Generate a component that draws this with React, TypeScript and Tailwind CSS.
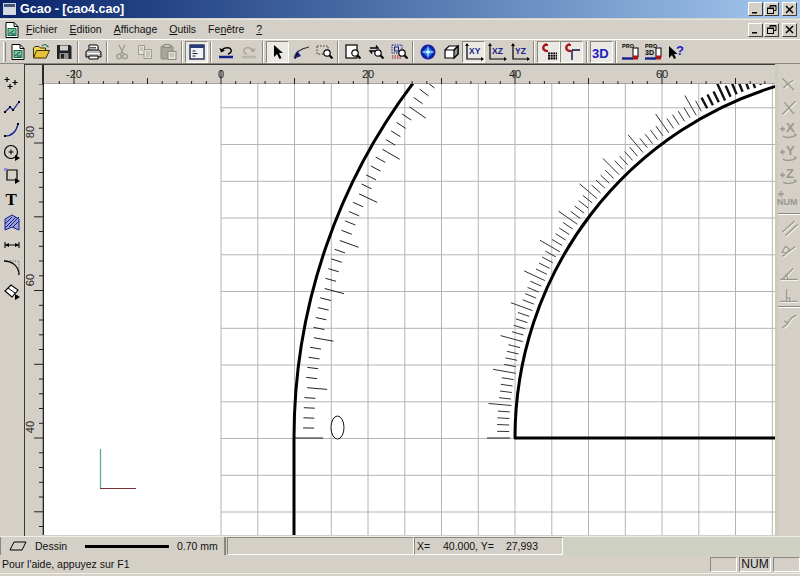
import React from "react";

const X = (u: number) => 221 + 7.35 * u;
const CX = 882.5;
const CY = 437;

function radial(deg: number, r1: number, r2: number) {
  const a = (deg * Math.PI) / 180;
  const c = Math.cos(a);
  const s = Math.sin(a);
  return `M${(CX - r1 * c).toFixed(1)} ${(CY - r1 * s).toFixed(1)}L${(CX - r2 * c).toFixed(1)} ${(CY - r2 * s).toFixed(1)}`;
}

function hatch(r: number, maxDeg: number, sign: number, longA: number, longB: number, shortA: number, shortB: number, from: number) {
  let long = "";
  let short = "";
  for (let d = from; d <= maxDeg; d++) {
    if (d % 5 === 0) long += radial(d, r + sign * longA, r + sign * longB);
    else short += radial(d, r + sign * shortA, r + sign * shortB);
  }
  return { long, short };
}

const S: React.FC<{ children: React.ReactNode; w?: number }> = ({ children, w = 18 }) => (
  <svg width={w} height={18} viewBox={`0 0 ${w} 18`} fill="none" className="shrink-0">{children}</svg>
);

const Mag = ({ x = 10, y = 10 }: { x?: number; y?: number }) => (
  <g>
    <circle cx={x} cy={y} r="3.2" fill="#fff" stroke="#000" strokeWidth="1.2" />
    <path d={`M${x + 2.3} ${y + 2.3}l3.2 3.2`} stroke="#000" strokeWidth="2" />
  </g>
);

const DocGlyph = () => (
  <S>
    <path d="M3 1.5h8l4 4v11H3z" fill="#fff" stroke="#000" />
    <path d="M11 1.5v4h4" stroke="#000" />
    <rect x="5" y="7.5" width="8" height="7" fill="#7fc79a" stroke="#0a6b3a" />
    <path d="M6 13l5-4M8 13h4" stroke="#0a3b6b" />
  </S>
);

const Open = () => (
  <S>
    <path d="M1.5 15V5l1.500-1.500h4L8.500 5h5v2.500" fill="#f3d65a" stroke="#3b3000" />
    <path d="M1.5 15l3-7.500h13L14 15z" fill="#e6c23c" stroke="#3b3000" />
    <path d="M10 3c2-2 4-2 5 0l1.500 1" stroke="#1f6d2a" strokeWidth="1.2" />
  </S>
);

const Save = () => (
  <S>
    <path d="M2 2h13l1.500 1.500V16H2z" fill="#222" />
    <rect x="5" y="2.500" width="8" height="5" fill="#cfcfcf" />
    <rect x="4.500" y="10" width="9" height="6" fill="#8f8f8f" />
    <rect x="6" y="11" width="3" height="4.500" fill="#222" />
  </S>
);

const Print = () => (
  <S>
    <path d="M5 7V2h8l1 1v4" fill="#fff" stroke="#000" />
    <path d="M2 8.500 4 7h10.500L17 9v5H2z" fill="#bdbdbd" stroke="#000" />
    <path d="M3 10.500h13" stroke="#fff" />
    <path d="M5 13h9v3H5z" fill="#fff" stroke="#000" />
    <path d="M6 6h6M6 4.500h6" stroke="#555" />
  </S>
);

const Cut = () => (
  <S>
    <path d="M6 2l4.500 9M12 2L7.500 11" stroke="#9d9a92" strokeWidth="1.300" />
    <circle cx="6" cy="13.500" r="2.300" stroke="#9d9a92" strokeWidth="1.300" />
    <circle cx="12" cy="13.500" r="2.300" stroke="#9d9a92" strokeWidth="1.300" />
  </S>
);

const Copy = () => (
  <S>
    <path d="M2.500 2.500h6v9h-6z" fill="#e4e1da" stroke="#9d9a92" />
    <path d="M8 6.500h7.500v9H8z" fill="#e4e1da" stroke="#9d9a92" />
    <path d="M10 9h4M10 11h4M10 13h4M4 5h3M4 7h3" stroke="#a8a59d" />
  </S>
);

const Paste = () => (
  <S>
    <rect x="2" y="3" width="12" height="13" rx="1" fill="#a8a59d" stroke="#8d8a82" />
    <rect x="5" y="1.500" width="6" height="3" fill="#c9c6be" stroke="#8d8a82" />
    <rect x="9" y="8.500" width="8" height="8" fill="#e4e1da" stroke="#8d8a82" />
    <path d="M11 11h4M11 13h4" stroke="#a8a59d" />
  </S>
);

const View = () => (
  <S>
    <rect x="2" y="2" width="14" height="14" fill="#f2f2f2" stroke="#101a4a" strokeWidth="1.300" />
    <rect x="2" y="2" width="14" height="3" fill="#2b3a7a" />
    <path d="M4.500 8h3M4.500 10.500h5M4.500 13h3" stroke="#101a4a" />
  </S>
);

const Undo = () => (
  <S>
    <path d="M5 7c2-3 8-3 9-.500s-1 4-3 4.500" stroke="#000" strokeWidth="1.400" />
    <path d="M2.500 5l1.500 4.500 4-2z" fill="#000" />
    <path d="M2 14h14" stroke="#14208c" strokeWidth="2.500" />
  </S>
);

const Redo = () => (
  <S>
    <path d="M13 7c-2-3-8-3-9-.500s1 4 3 4.500" stroke="#a8a59d" strokeWidth="1.400" />
    <path d="M15.500 5L14 9.500l-4-2z" fill="#a8a59d" />
    <path d="M2 14h14" stroke="#b9b6ae" strokeWidth="2.500" />
  </S>
);

const Arrow = () => (
  <S>
    <path d="M5 2v12l3-3 2.500 5 2-1-2.500-5h4z" fill="#000" />
  </S>
);

const Node = () => (
  <S>
    <path d="M2 15c1-5 5-9 15-11" stroke="#333" strokeWidth="1.200" />
    <path d="M5 7.500 4 15l5-2z" fill="#14208c" />
    <path d="M3 16l2-6" stroke="#000" />
  </S>
);

const ZoomBox = () => (
  <S>
    <path d="M2 3h11v8H2z" stroke="#333" strokeDasharray="1.500 1.500" />
    <Mag x={12} y={10} />
  </S>
);

const ZoomPage = () => (
  <S>
    <rect x="2" y="2" width="11" height="13" fill="#fff" stroke="#000" strokeWidth="1.200" />
    <Mag x={11} y={10} />
  </S>
);

const ZoomBack = () => (
  <S>
    <path d="M3 5h8l-2-2.500M9 8H3l2 2.500" stroke="#000" strokeWidth="1.300" />
    <Mag x={11} y={10} />
  </S>
);

const ZoomSel = () => (
  <S>
    <rect x="2" y="2" width="10" height="8" stroke="#14208c" strokeDasharray="1.500 1" />
    <path d="M2 13h9M2 15h9" stroke="#b01818" strokeDasharray="1.500 1" strokeWidth="1.200" />
    <rect x="4.500" y="4" width="4" height="4" stroke="#14208c" />
    <Mag x={12} y={10} />
  </S>
);

const Globe = () => (
  <S>
    <circle cx="9" cy="9" r="7.500" fill="#1222a8" />
    <circle cx="9" cy="9" r="4" fill="#2e78e8" />
    <path d="M9 3.500v11M3.500 9h11" stroke="#8fd8ff" strokeWidth="1.300" />
    <circle cx="9" cy="9" r="1.800" fill="#dff6ff" />
  </S>
);

const Cube = () => (
  <S>
    <path d="M3 7l4-4h9v8l-4 4H3z" fill="#fff" stroke="#000" strokeWidth="1.200" />
    <path d="M12 7v8l4-4V3z" fill="#9a9a9a" stroke="#000" strokeWidth="1.200" />
    <path d="M3 7h9l4-4" stroke="#000" strokeWidth="1.200" />
  </S>
);

const Axis = ({ t }: { t: string }) => (
  <S w={20}>
    <path d="M3 2v14h14" stroke="#000" strokeWidth="1.200" />
    <path d="M3 0l-2 3h4zM20 16l-3-2v4z" fill="#000" />
    <text x="5" y="11" fontFamily="Liberation Sans, sans-serif" fontWeight="700" fontSize="8.500" fill="#14208c">{t}</text>
  </S>
);

const MagnetGrid = () => (
  <S>
    <path d="M7 8C2 8 2 1.500 7 1.500" stroke="#a81818" strokeWidth="2.400" />
    <path d="M6 1h2v2H6zM6 7h2v2H6z" fill="#a81818" />
    <path d="M8 9.500h9v7H8z" fill="#000" />
    <path d="M10.500 9v8M13 9v8M15.500 9v8M8 11.500h9M8 14h9" stroke="#d8d5ce" strokeWidth=".7" />
  </S>
);

const MagnetPerp = () => (
  <S>
    <path d="M7 8C2 8 2 1.500 7 1.500" stroke="#a81818" strokeWidth="2.400" />
    <path d="M6 1h2v2H6zM6 7h2v2H6z" fill="#a81818" />
    <path d="M9 7h8M9 7v10" stroke="#0c0c40" strokeWidth="1.400" />
  </S>
);

const ThreeD = () => (
  <S w={20}>
    <text x="0" y="15" fontFamily="Liberation Sans, sans-serif" fontWeight="700" fontSize="13" fill="#1a1ac0">3D</text>
  </S>
);

const Pro = ({ d3 }: { d3?: boolean }) => (
  <S w={20}>
    <text x="1" y="5" fontFamily="Liberation Sans, sans-serif" fontWeight="700" fontSize="5.500" fill="#000">PRO</text>
    {d3 && <text x="1" y="12" fontFamily="Liberation Sans, sans-serif" fontWeight="700" fontSize="7" fill="#000">3D</text>}
    <rect x="12" y="5" width="5" height="9" fill="#fff" stroke="#000" />
    <path d="M1 15.500h11" stroke="#14208c" strokeWidth="2.400" />
    <rect x="12" y="12.500" width="5" height="4" fill="#a81818" />
  </S>
);

const Help = () => (
  <S>
    <path d="M1 3v12l3-3 2 4 2-1-2-4h3.500z" fill="#000" />
    <text x="8" y="12" fontFamily="Liberation Sans, sans-serif" fontWeight="700" fontSize="13" fill="#1a1ac0">?</text>
  </S>
);

const Btn = ({ children, on }: { children: React.ReactNode; on?: boolean }) => (
  <div className={`w-[23px] h-[22px] flex items-center justify-center shrink-0 ${on ? "bg-[#ebe9e3] border border-t-[#8a877f] border-l-[#8a877f] border-r-white border-b-white" : ""}`}>
    {children}
  </div>
);

const Sep = ({ w = "w-[6px]" }: { w?: string }) => (
  <div className={`${w} h-[22px] flex justify-center shrink-0`}>
    <div className="w-[2px] h-full border-l border-l-[#8a877f] border-r border-r-white" />
  </div>
);

const Caption = () => {
  const cls = "w-[15px] h-[14px] bg-[#d4d0c8] border border-t-white border-l-white border-r-[#404040] border-b-[#404040] flex items-center justify-center shrink-0";
  return (
    <div className="flex gap-[1px] items-center">
      <div className={cls}><svg width="9" height="9" viewBox="0 0 9 9"><path d="M1 7h5v1.500H1z" fill="#000" /></svg></div>
      <div className={cls}><svg width="10" height="9" viewBox="0 0 10 9" fill="none"><path d="M3 2.500V.5h6v5H7" stroke="#000" /><rect x=".5" y="3" width="6" height="5.500" stroke="#000" /><path d="M.5 3.500h6M3 1h6" stroke="#000" /></svg></div>
      <div className={`${cls} ml-[2px]`}><svg width="9" height="9" viewBox="0 0 9 9"><path d="M1 1l7 7M8 1 1 8" stroke="#000" strokeWidth="1.500" /></svg></div>
    </div>
  );
};

/* left tools */
const Pts = () => (
  <S><path d="M4 2v5M1.500 4.500h5M12 5v5M9.500 7.500h5M7 9v5M4.500 11.500h5" stroke="#000" strokeWidth="1.200" /></S>
);
const Poly = () => (
  <S><path d="M2 14l5-5 3 3 6-8" stroke="#14208c" strokeWidth="1.200" /><path d="M1 13h2v2H1zM6 8h2v2H6zM9 11h2v2H9zM15 3h2v2h-2z" fill="#000" /></S>
);
const Curve = () => (
  <S><path d="M2 15c6 0 11-3 13-12" stroke="#14208c" strokeWidth="1.200" /><path d="M1 14h2v2H1zM14 2h2v2h-2z" fill="#000" /></S>
);
const Circ = () => (
  <S><circle cx="8" cy="8" r="6.500" stroke="#000" strokeWidth="1.200" /><path d="M8 5.500v5M5.500 8h5" stroke="#000" /><path d="M12 11v6l5-3z" fill="#000" /></S>
);
const Rect = () => (
  <S><path d="M4 3h10v10H4z" stroke="#000" strokeWidth="1.200" /><path d="M1 1h3v3H1z" fill="#8a8ae0" /><path d="M12 11v6l5-3z" fill="#000" /></S>
);
const TGlyph = () => (
  <S><text x="2.500" y="15" fontFamily="Liberation Serif, serif" fontWeight="700" fontSize="17" fill="#000">T</text></S>
);
const HatchI = () => (
  <S>
    <path d="M2 6l7-4 7 4v11l-7-3-7 3z" fill="#9ea0d8" stroke="#14208c" />
    <path d="M2 11l7-7M2 15l11-11M6 14l10-10M10 14l6-6" stroke="#14208c" />
  </S>
);
const Dim = () => (
  <S><path d="M2 6v6M16 6v6M2 9h14" stroke="#000" strokeWidth="1.100" /><path d="M2 9l4-2v4zM16 9l-4-2v4z" fill="#000" /></S>
);
const Fillet = () => (
  <S><path d="M1 2c8 0 15 5 15 14" stroke="#000" strokeWidth="1.300" /><path d="M7 2h9v12" stroke="#555" strokeDasharray="1 1.500" /></S>
);
const Eraser = () => (
  <S><path d="M2 9l6-6 7 5-6 7z" fill="#fff" stroke="#000" strokeWidth="1.100" /><path d="M5 6l7 5" stroke="#000" /><path d="M12 12v6l5-3z" fill="#000" /></S>
);

/* right tools (disabled) */
const g = "#9b988f";
const gl = "#f2f0ea";
const Ghost = ({ d }: { d: string }) => (
  <S w={20}>
    <g transform="scale(1.100)">
      <path d={d} stroke={gl} strokeWidth="1.300" transform="translate(.8 .8)" />
      <path d={d} stroke={g} strokeWidth="1.300" />
    </g>
  </S>
);
const Letter = ({ t }: { t: string }) => (
  <S w={20}>
    <path d="M1 8h5M3.500 5.500v5" stroke={g} strokeWidth="1.500" />
    <text x="7" y="11" fontFamily="Liberation Sans, sans-serif" fontWeight="700" fontSize="13" fill={g}>{t}</text>
    <path d="M4 15c2 2 10 2 13-1l-2-1.500" stroke={g} strokeWidth="1.500" />
  </S>
);
const NumI = () => (
  <S w={24}>
    <path d="M1 4h6M4 1v6" stroke={g} strokeWidth="1.300" />
    <text x="0" y="15" fontFamily="Liberation Sans, sans-serif" fontSize="9" fontWeight="700" fill={g}>NUM</text>
  </S>
);

const topTools: React.ReactNode[] = [
  <Btn key="a"><DocGlyph /></Btn>,
  <Btn key="b"><Open /></Btn>,
  <Btn key="c"><Save /></Btn>,
  <Sep key="s1" />,
  <Btn key="d"><Print /></Btn>,
  <Sep key="s2" />,
  <Btn key="e"><Cut /></Btn>,
  <Btn key="f"><Copy /></Btn>,
  <Btn key="g"><Paste /></Btn>,
  <Sep key="s3" />,
  <Btn key="h" on><View /></Btn>,
  <Sep key="s4" />,
  <Btn key="i"><Undo /></Btn>,
  <Btn key="j"><Redo /></Btn>,
  <Sep key="s5" />,
  <Btn key="k" on><Arrow /></Btn>,
  <Btn key="l"><Node /></Btn>,
  <Btn key="m"><ZoomBox /></Btn>,
  <Sep key="s6" />,
  <Btn key="n"><ZoomPage /></Btn>,
  <Btn key="o"><ZoomBack /></Btn>,
  <Btn key="p"><ZoomSel /></Btn>,
  <Sep key="s7" />,
  <Btn key="q"><Globe /></Btn>,
  <Btn key="r"><Cube /></Btn>,
  <Btn key="t" on><Axis t="XY" /></Btn>,
  <Btn key="u"><Axis t="XZ" /></Btn>,
  <Btn key="v"><Axis t="YZ" /></Btn>,
  <Sep key="s8" />,
  <Btn key="w" on><MagnetGrid /></Btn>,
  <Btn key="x" on><MagnetPerp /></Btn>,
  <Sep key="s9" w="w-[7px]" />,
  <Btn key="y" on><ThreeD /></Btn>,
  <Sep key="s10" />,
  <Btn key="z"><Pro /></Btn>,
  <Btn key="aa"><Pro d3 /></Btn>,
  <Btn key="ab"><Help /></Btn>,
];

const leftTools = [Pts, Poly, Curve, Circ, Rect, TGlyph, HatchI, Dim, Fillet, Eraser];

function HRuler() {
  const xs: React.ReactNode[] = [];
  let d = "";
  for (let u = -22; u <= 76; u += 2) {
    const x = X(u);
    if (x < 44 || x > 775) continue;
    const h = u % 20 === 0 ? 15 : u % 10 === 0 ? 7 : 4;
    d += `M${x.toFixed(1)} 83V${83 - h}`;
  }
  [-20, 0, 20, 40, 60].forEach((u) => {
    xs.push(
      <text key={u} x={X(u)} y={76} textAnchor="middle" fontSize="11" fontFamily="Liberation Sans, sans-serif" fill="#222">{u}</text>
    );
  });
  return (
    <svg width="731" height="20" viewBox="44 63 731 20" className="block shrink-0">
      <path d={d} stroke="#222" strokeWidth="1" />
      {xs}
      <path d="M44 82.500H775" stroke="#222" strokeWidth="1.600" />
    </svg>
  );
}

function VRuler() {
  let d = "";
  for (let k = -6; k < 30; k++) {
    const y = 142 + 14.75 * k;
    if (y < 83 || y > 534) continue;
    const long = k % 5 === 0;
    d += `M44 ${y.toFixed(1)}H${long ? 34 : 39}`;
  }
  const labels: [string, number][] = [["80", 131], ["60", 279], ["40", 426]];
  return (
    <svg width="20" height="451" viewBox="24 83 20 451" className="block shrink-0">
      <path d={d} stroke="#222" strokeWidth="1" />
      <path d="M43.500 83V534" stroke="#222" strokeWidth="1.600" />
      {labels.map(([t, y]) => (
        <text key={t} transform={`translate(34 ${y}) rotate(-90)`} textAnchor="middle" fontSize="11" fontFamily="Liberation Sans, sans-serif" fill="#222">{t}</text>
      ))}
    </svg>
  );
}

function Drawing() {
  const grid: React.ReactNode[] = [];
  for (let k = 0; k <= 15; k++) {
    const x = 221 + 36.75 * k;
    if (x < 775) grid.push(<path key={`v${k}`} d={`M${x.toFixed(1)} 83V534`} stroke="#b4b4b4" strokeWidth="1" />);
  }
  for (let k = -2; k <= 9; k++) {
    const y = 437.5 - 36.75 * k;
    if (y > 83 && y < 534) grid.push(<path key={`h${k}`} d={`M221 ${y.toFixed(1)}H775`} stroke="#b4b4b4" strokeWidth="1" />);
  }
  const leftArc = hatch(588.5, 38, -1, 11, 31, 9, 20, 1);
  const rightArcA = hatch(367.5, 61, 1, 5, 28, 6, 18, 1);
  const rightArcB = hatch(367.5, 71, 1, 5, 28, 6, 18, 62);
  const arc = (r: number, deg: number) => {
    const a = (deg * Math.PI) / 180;
    return `M${CX - r} ${CY}A${r} ${r} 0 0 1 ${(CX - r * Math.cos(a)).toFixed(1)} ${(CY - r * Math.sin(a)).toFixed(1)}`;
  };
  return (
    <svg width="731" height="451" viewBox="44 83 731 451" className="block shrink-0">
      {grid}
      <path d="M293 437H323M487 437H510" stroke="#222" strokeWidth="1" />
      <path d={leftArc.long + leftArc.short} stroke="#222" strokeWidth="1" />
      <path d={rightArcA.long + rightArcA.short} stroke="#333" strokeWidth="1" />
      <path d={rightArcB.long + rightArcB.short} stroke="#111" strokeWidth="2.400" />
      <path d={arc(588.5, 38)} stroke="#000" strokeWidth="3" fill="none" />
      <path d="M294 437V534" stroke="#000" strokeWidth="3" />
      <path d={arc(367.5, 75)} stroke="#000" strokeWidth="3" fill="none" />
      <path d="M514 437H775" stroke="#000" strokeWidth="3" />
      <ellipse cx="337.500" cy="426.500" rx="6.500" ry="11.500" stroke="#111" strokeWidth="1" fill="#fff" />
      <path d="M100.500 448V487" stroke="#5fae80" strokeWidth="1.300" />
      <path d="M100 487.500H136" stroke="#7a3038" strokeWidth="1.200" />
    </svg>
  );
}

function Sunken({ className, children }: { className: string; children?: React.ReactNode }) {
  return (
    <div className={`${className} border border-t-[#8a877f] border-l-[#8a877f] border-r-white border-b-white flex items-center shrink-0`}>{children}</div>
  );
}

export default function App() {
  return (
    <div className="w-[800px] h-[576px] overflow-hidden flex flex-col bg-[#d4d0c8] text-[#111] font-['Liberation_Sans',sans-serif]">
      {/* title */}
      <div className="h-[18px] shrink-0 flex items-center justify-between pr-[3px] bg-linear-to-r from-[#0a246a] to-[#a6caf0]">
        <div className="flex items-center">
          <div className="ml-[3px] w-[13px] h-[12px] border border-[#cfd4e0] bg-[#d8d8e0] flex flex-col">
            <div className="h-[3px] bg-[#46557f]" />
          </div>
          <span className="ml-[4px] text-[12.5px] font-bold text-white leading-none">Gcao - [cao4.cao]</span>
        </div>
        <Caption />
      </div>
      {/* menu */}
      <div className="h-[20px] mt-[1px] shrink-0 flex items-center justify-between pr-[3px] border-t border-t-[#e9e7e1]">
        <div className="flex items-center text-[10.5px] leading-none">
          <div className="ml-[3px] w-[18px] flex items-center"><DocGlyph /></div>
          <span className="ml-[5px]"><u>F</u>ichier</span>
          <span className="ml-[12px]"><u>E</u>dition</span>
          <span className="ml-[12px]"><u>A</u>ffichage</span>
          <span className="ml-[12px]"><u>O</u>utils</span>
          <span className="ml-[12px]">Fe<u>n</u>être</span>
          <span className="ml-[12px]"><u>?</u></span>
        </div>
        <Caption />
      </div>
      {/* top toolbar */}
      <div className="h-[25px] shrink-0 flex items-center border-t border-t-white shadow-[inset_0_-1px_0_#8a877f]">
        <div className="ml-[3px] w-[3px] h-[20px] border-l border-l-white border-r border-r-[#8a877f] shrink-0" />
        {topTools}
      </div>
      {/* middle */}
      <div className="h-[472px] shrink-0 flex">
        <div className="w-[24px] shrink-0 flex flex-col items-center pt-[8px]">
          {leftTools.map((I, i) => (
            <div key={i} className="h-[23px] w-[24px] flex items-center justify-center shrink-0"><I /></div>
          ))}
        </div>
        <div className="w-[751px] shrink-0 flex flex-col border-l border-l-[#3a3a3a]">
          <div className="flex h-[20px] shrink-0 border-t border-t-[#3a3a3a]">
            <div className="w-[19px] h-full border-r-2 border-r-[#2a2a2a] shrink-0" />
            <HRuler />
          </div>
          <div className="flex">
            <div className="w-[19px] overflow-hidden flex justify-end shrink-0"><VRuler /></div>
            <div className="bg-white"><Drawing /></div>
          </div>
        </div>
        <div className="w-[25px] shrink-0 flex flex-col items-center pt-[8px] border-l-[3px] border-l-[#c9cdb9]">
          <div className="h-[23px] flex items-center"><Ghost d="M3 3l5 5 5-3M8 8l6 6M4 12l4-4" /></div>
          <div className="h-[23px] flex items-center"><Ghost d="M3 15L15 3M5 4l9 11" /></div>
          <div className="h-[23px] flex items-center"><Letter t="X" /></div>
          <div className="h-[23px] flex items-center"><Letter t="Y" /></div>
          <div className="h-[23px] flex items-center"><Letter t="Z" /></div>
          <div className="h-[23px] flex items-center"><NumI /></div>
          <div className="w-full h-[2px] my-[3px] border-t border-t-[#8a877f] border-b border-b-white" />
          <div className="h-[20px] flex items-center"><Ghost d="M3 12L14 2M6 15L17 5" /></div>
          <div className="h-[23px] flex items-center"><Ghost d="M3 14L15 5M3 10l3-5 4 3-3 3z" /></div>
          <div className="h-[23px] flex items-center"><Ghost d="M1 14h16M3 14L13 4M8 14c0-3-1-4-2-5" /></div>
          <div className="h-[22px] flex items-center"><Ghost d="M1 14h16M7 3v11M7 11h3v3" /></div>
          <div className="w-full h-[2px] border-t border-t-[#8a877f] border-b border-b-white" />
          <div className="h-[23px] flex items-center"><Ghost d="M3 15c4-1 5-4 7-7s3-3 6-4M5 9l3 2" /></div>
        </div>
      </div>
      {/* status 1 */}
      <div className="h-[19px] shrink-0 flex items-stretch bg-[#ced0c2] border-t border-t-[#efeee9] text-[10.5px] leading-none">
        <div className="w-[226px] shrink-0 bg-[#d4d0c8] flex items-center border-l border-l-[#8a877f] border-r-2 border-r-[#8a877f]">
          <svg width="18" height="10" viewBox="0 0 18 10" fill="none" className="ml-[8px] shrink-0"><path d="M5 1h12l-4 8H1z" stroke="#000" /></svg>
          <span className="ml-[8px] w-[50px]">Dessin</span>
          <div className="w-[84px] h-[3px] bg-black shrink-0" />
          <span className="ml-[8px]">0.70 mm</span>
        </div>
        <Sunken className="w-[187px] ml-[1px] bg-[#d4d0c8]" />
        <Sunken className="w-[149px] bg-[#d4d0c8] pl-[2px]">
          <span className="w-[26px]">X=</span>
          <span>40.000, Y=</span>
          <span className="ml-[12px]">27,993</span>
        </Sunken>
      </div>
      {/* status 2 */}
      <div className="h-[19px] shrink-0 flex items-center justify-between border-b border-b-[#efeee9] text-[10.5px] leading-none">
        <span className="ml-[2px]">Pour l'aide, appuyez sur F1</span>
        <div className="flex items-stretch h-[15px] gap-[2px]">
          <Sunken className="w-[27px]" />
          <Sunken className="w-[32px] justify-center text-[12px]">NUM</Sunken>
          <Sunken className="w-[27px]" />
        </div>
      </div>
      <div className="flex-1 bg-[#d4d0c8]" />
    </div>
  );
}
